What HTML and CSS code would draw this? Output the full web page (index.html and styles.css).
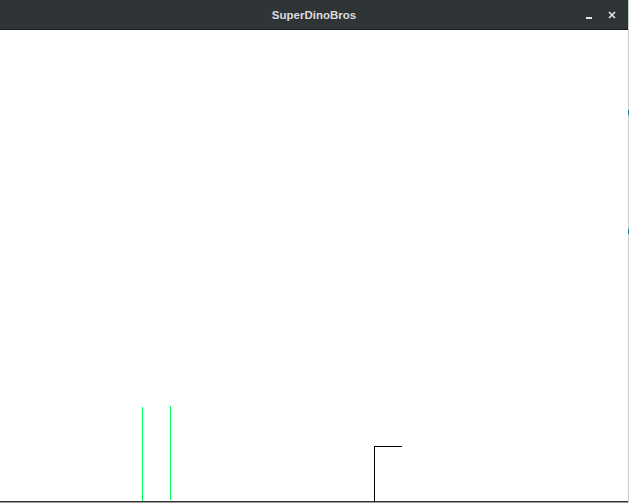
FILE: index.html
```html
<!DOCTYPE html>
<html>
<head>
<meta charset="utf-8">
<link rel="stylesheet" href="styles.css">
</head>
<body>
<div class="screen">
  <div class="window">
    <div class="titlebar">
      <span class="title">SuperDinoBros</span>
      <div class="controls">
        <span class="btn-min"></span>
        <svg class="btn-close" width="8" height="8" viewBox="0 0 8 8"><path d="M1 1L7 7M7 1L1 7" stroke="#e6e6e6" stroke-width="1.6" fill="none"/></svg>
      </div>
    </div>
    <div class="canvas">
      <div class="pole pole-a"></div>
      <div class="pole pole-b"></div>
      <div class="hook"></div>
    </div>
  </div>
  <div class="edge">
    <span class="mark mark-a"></span>
    <span class="mark mark-b"></span>
  </div>
</div>
</body>
</html>
```
FILE: styles.css
```css
html, body {
  margin: 0;
  padding: 0;
  background: #ffffff;
}
.screen {
  width: 629px;
  height: 503px;
  display: flex;
  overflow: hidden;
}
.window {
  width: 628px;
  height: 503px;
  display: flex;
  flex-direction: column;
}
.titlebar {
  height: 29px;
  background: #2f3437;
  border-bottom: 1px solid #1b1e20;
  display: flex;
  align-items: center;
  justify-content: center;
  position: relative;
}
.title {
  font-family: "Liberation Sans", Arial, sans-serif;
  font-weight: bold;
  font-size: 11.5px;
  color: #dcdcdc;
  margin-left: 0;
  margin-top: 1px;
}
.controls {
  position: absolute;
  right: 12px;
  top: 10px;
  display: flex;
  align-items: flex-end;
  gap: 16px;
  height: 9px;
}
.btn-min {
  width: 6px;
  height: 2px;
  background: #e6e6e6;
}
.btn-close {
  display: block;
}
.canvas {
  flex: 1;
  position: relative;
  background: #ffffff;
  border-bottom: 1px solid #333333;
  box-shadow: 0 1px 0 #9a9a9a;
  margin-bottom: 1px;
}
.pole {
  position: absolute;
  width: 1px;
  background: #00ff55;
}
.pole-a {
  left: 142px;
  top: 377px;
  height: 94px;
}
.pole-b {
  left: 170px;
  top: 376px;
  height: 94px;
}
.hook {
  position: absolute;
  left: 374px;
  top: 416px;
  width: 28px;
  height: 56px;
  border-left: 1px solid #000;
  border-top: 1px solid #000;
  box-sizing: border-box;
}
.edge {
  width: 1px;
  height: 503px;
  background: #c8cfcf;
  position: relative;
}
.mark {
  position: absolute;
  left: 0;
  width: 1px;
  height: 5px;
  background: #1d7fa0;
}
.mark-a { top: 110px; }
.mark-b { top: 229px; }
```
